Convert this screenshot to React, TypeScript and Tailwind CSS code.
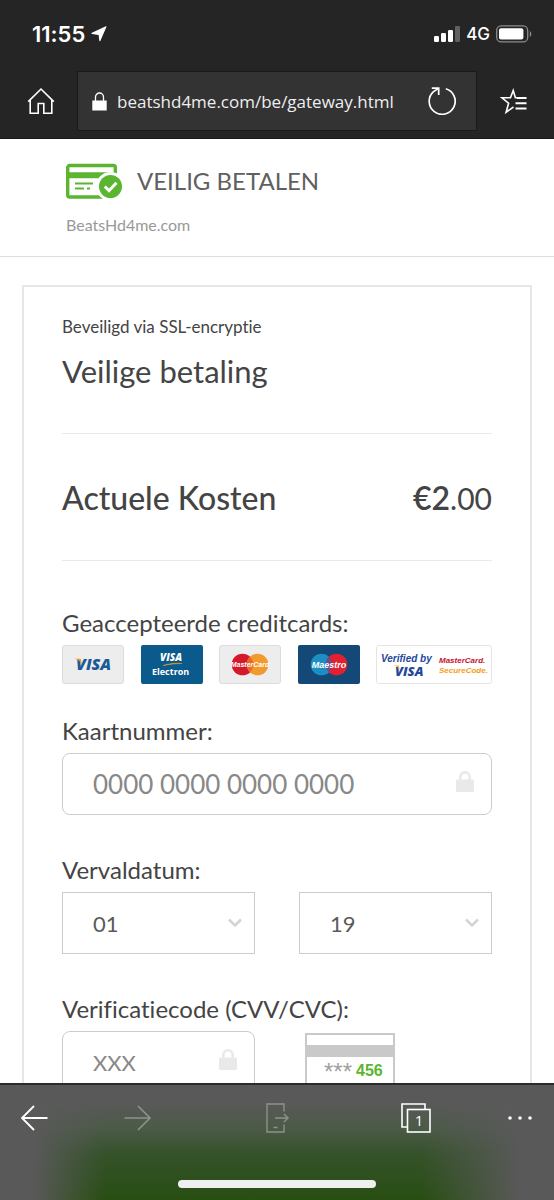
import React from 'react';

const months = ['01', '02', '03', '04', '05', '06', '07', '08', '09', '10', '11', '12'];
const years = ['19', '20', '21', '22', '23', '24', '25', '26', '27', '28'];

const StatusBar: React.FC = () => (
  <div className="flex h-16 items-center justify-between pt-1 pl-8 pr-[22px] font-['Inter',sans-serif] text-white">
    <div className="flex items-center gap-1.5">
      <span className="text-[22px] font-semibold leading-7">11:55</span>
      <svg width="16" height="16" viewBox="0 0 16 16" fill="currentColor">
        <path d="M15.500.8 9.300 14.900c-.3.6-.9.5-1-.1L7.600 8.900 1 8.100C.2 8 .1 7.200.9 6.800L14.800.2c.5-.2.9.1.7.6z" />
      </svg>
    </div>
    <div className="flex items-center gap-1.5">
      <svg width="26" height="16" viewBox="0 0 26 16" fill="currentColor">
        <rect x="0" y="10" width="5" height="6" rx="1.3" />
        <rect x="7" y="7" width="5" height="9" rx="1.3" />
        <rect x="14" y="4" width="5" height="12" rx="1.3" />
        <rect x="21" y="0" width="5" height="16" rx="1.3" opacity=".28" />
      </svg>
      <span className="text-[17px] font-medium leading-7">4G</span>
      <svg width="36" height="18" viewBox="0 0 36 18" fill="none">
        <rect x=".7" y=".9" width="31" height="16" rx="4.5" stroke="#8c8c8c" strokeWidth="1.3" />
        <rect x="3" y="3.2" width="24.4" height="11.4" rx="2" fill="currentColor" />
        <path d="M33.8 6v6c2-.8 2-5.200 0-6z" fill="#8c8c8c" />
      </svg>
    </div>
  </div>
);

const AddressBar: React.FC = () => (
  <div className="flex h-[74px] items-center text-white">
    <button type="button" aria-label="Home" className="flex w-[77px] justify-center pl-1">
      <svg width="28" height="28" viewBox="0 0 28 28" fill="none" stroke="currentColor" strokeWidth="1.600">
        <path d="M1.200 14.600 14 2l12.800 12.600M3.200 13v13.200h8V16.500h5.600v9.700h8V13" />
      </svg>
    </button>
    <div className="flex h-[60px] flex-1 items-center border border-[#1a1a1a] bg-[#333333] pl-3.5 pr-5">
      <svg width="15" height="19" viewBox="0 0 15 19" fill="none">
        <path d="M3.500 9V5a4 4 0 0 1 8 0v4" stroke="currentColor" strokeWidth="1.300" />
        <rect x=".3" y="8.500" width="14.400" height="10" fill="currentColor" />
      </svg>
      <span className="flex-1 pl-2.5 pt-0.5 font-['Open_Sans',sans-serif] text-[17px] leading-6 text-[#eeeeee]">
        beatshd4me.com/be/gateway.html
      </span>
      <button type="button" aria-label="Vernieuwen">
        <svg width="28" height="28" viewBox="0 0 28 28" fill="none" stroke="currentColor" strokeWidth="1.700">
          <path d="M17.800 1.800A13 13 0 1 1 5.500 4.600L10.400 1.500M3.800 1.200h6.900v6.900" />
        </svg>
      </button>
    </div>
    <button type="button" aria-label="Favorieten" className="flex w-[77px] justify-center pr-1">
      <svg width="28" height="27" viewBox="0 0 28 27" fill="none" stroke="currentColor" strokeWidth="1.600">
        <path d="M17 10h9.500M15.500 15.300h11M15.500 20.500h11" strokeWidth="2" />
        <path d="M17.200 9.800h-1.800L13.200 2.500 10.500 9.800H2l6.600 5.400-2.500 9L13.500 19" />
      </svg>
    </button>
  </div>
);

const PaymentLogo: React.FC = () => (
  <svg width="57" height="36" viewBox="0 0 57 36" fill="none">
    <rect x="1.700" y="2.500" width="47.600" height="31.500" rx="2" stroke="#5cb531" strokeWidth="3.400" />
    <path d="M1 9.300h49v6H1z" fill="#5cb531" />
    <path d="M9 20.500h18M9 25.500h9M21 25.500h3" stroke="#5cb531" strokeWidth="2.200" />
    <circle cx="44.500" cy="23.500" r="14.500" fill="#fff" />
    <circle cx="44.500" cy="23.500" r="11.500" fill="#5cb531" />
    <path d="m38.800 23.500 4.200 4.200 7.500-8" stroke="#fff" strokeWidth="3" />
  </svg>
);

const LockIcon: React.FC = () => (
  <svg
    className="pointer-events-none absolute right-[18px] top-[18px]"
    width="18"
    height="21"
    viewBox="0 0 18 21"
    fill="none"
  >
    <path d="M4.300 9.500V6a4.700 4.700 0 0 1 9.400 0v3.500" stroke="#e9e9e9" strokeWidth="2.600" />
    <rect y="8.500" width="18" height="12.500" rx="1" fill="#e9e9e9" />
  </svg>
);

const CardLogos: React.FC = () => (
  <div className="mt-1.5 flex justify-between">
    <svg width="62" height="39" viewBox="0 0 62 39" aria-label="Visa">
      <rect x=".5" y=".5" width="61" height="38" rx="2.500" fill="#ededed" stroke="#dcdcdc" />
      <text x="14" y="25" fontFamily="Open Sans" fontSize="16" fontWeight="800" fontStyle="italic" fill="#1a5a96">
        VISA
      </text>
      <path d="M12.800 13.700h4.500c1.200 0 1.600.6 1.800 1.600l.8 3.700c-1.300-2.500-3.800-4.300-7.100-5.300z" fill="#e79b2f" />
    </svg>
    <svg width="62" height="39" viewBox="0 0 62 39" aria-label="Visa Electron">
      <rect width="62" height="39" rx="2" fill="#0b5a8c" />
      <text x="19" y="16" fontFamily="Open Sans" fontSize="10" fontWeight="800" fontStyle="italic" fill="#fff">
        VISA
      </text>
      <path d="M22 20.500c7-2.300 13-2.400 19-2-6 .2-12 .7-19 2z" fill="#e79b2f" stroke="#e79b2f" strokeWidth=".5" />
      <text x="11" y="30" fontFamily="Open Sans" fontSize="9" fontWeight="700" fill="#fff">
        Electron
      </text>
    </svg>
    <svg width="62" height="39" viewBox="0 0 62 39" aria-label="MasterCard">
      <rect x=".5" y=".5" width="61" height="38" rx="2.500" fill="#ededed" stroke="#dcdcdc" />
      <circle cx="23.500" cy="19.500" r="10.800" fill="#d5192d" />
      <circle cx="38.500" cy="19.500" r="10.800" fill="#f39a2d" />
      <path d="M31 11.800a10.800 10.800 0 0 1 0 15.400 10.800 10.800 0 0 1 0-15.400z" fill="#e8672a" />
      <text
        x="31"
        y="22"
        textAnchor="middle"
        fontFamily="Liberation Sans"
        fontSize="7"
        fontWeight="700"
        fontStyle="italic"
        fill="#fff"
      >
        MasterCard
      </text>
    </svg>
    <svg width="62" height="39" viewBox="0 0 62 39" aria-label="Maestro">
      <rect width="62" height="39" rx="2" fill="#144877" />
      <circle cx="23.500" cy="19.500" r="10.800" fill="#1b8fc4" />
      <circle cx="38.500" cy="19.500" r="10.800" fill="#e3202f" />
      <path d="M31 11.800a10.800 10.800 0 0 1 0 15.400 10.800 10.800 0 0 1 0-15.400z" fill="#6c4b88" />
      <text
        x="31"
        y="23"
        textAnchor="middle"
        fontFamily="Liberation Sans"
        fontSize="9"
        fontWeight="700"
        fontStyle="italic"
        fill="#fff"
      >
        Maestro
      </text>
    </svg>
    <svg width="116" height="39" viewBox="0 0 116 39" aria-label="Verified by Visa, MasterCard SecureCode">
      <rect x=".5" y=".5" width="115" height="38" rx="2.500" fill="#fff" stroke="#e4e4e4" />
      <g fontFamily="Liberation Sans" fontStyle="italic" fontWeight="700">
        <text x="5" y="17" fontSize="10" fill="#24489c">
          Verified by
        </text>
        <text x="19" y="31" fontFamily="Open Sans" fontSize="13" fontWeight="800" fill="#24489c">
          VISA
        </text>
        <text x="63" y="18" fontSize="8" fill="#c4122f">
          MasterCard.
        </text>
        <text x="63" y="28" fontSize="8" fill="#f49b20">
          SecureCode.
        </text>
      </g>
      <path d="M18 20.500h3.600c1 0 1.300.5 1.500 1.300l.7 3.200c-1-2.200-3-3.700-5.800-4.500z" fill="#f5b52e" />
    </svg>
  </div>
);

const CvvCard: React.FC = () => (
  <svg width="90" height="60" viewBox="0 0 90 60" fill="none" aria-label="Voorbeeld verificatiecode">
    <rect x="1" y="1" width="88" height="58" stroke="#c9c9c9" strokeWidth="2" />
    <path d="M1 12h88v12H1z" fill="#c9c9c9" />
    <text x="19" y="47" fontFamily="Liberation Sans" fontSize="24" fill="#a0a0a0">
      ***
    </text>
    <text x="51" y="43" fontFamily="Liberation Sans" fontSize="16" fontWeight="700" fill="#5cb531">
      456
    </text>
  </svg>
);

interface DateSelectProps {
  label: string;
  options: string[];
}

const DateSelect: React.FC<DateSelectProps> = ({ label, options }) => (
  <div className="relative">
    <select
      aria-label={label}
      defaultValue={options[0]}
      className="h-[62px] w-full appearance-none rounded-none border border-[#cccccc] bg-white pl-[30px] pr-10 text-[22px] text-[#5a5a5a]"
    >
      {options.map((option) => (
        <option key={option}>{option}</option>
      ))}
    </select>
    <svg
      className="pointer-events-none absolute right-3 top-6"
      width="16"
      height="14"
      viewBox="0 0 16 14"
      fill="none"
      stroke="#d4d4d4"
      strokeWidth="2.600"
    >
      <path d="m2 3.500 6 6 6-6" />
    </svg>
  </div>
);

const PaymentForm: React.FC = () => (
  <form className="mx-[22px] mt-7 border-2 border-[#e6e6e6] px-[38px] pt-7 pb-10 text-[#444444]">
    <p className="text-[17px] leading-6">Beveiligd via SSL-encryptie</p>
    <h1 className="mt-3 text-[31px] leading-10">Veilige betaling</h1>

    <div className="mt-[42px] flex items-center justify-between border-y border-[#e9e9e9] pt-11 pb-[42px] leading-10">
      <span className="text-[32px] font-medium">Actuele Kosten</span>
      <span className="text-[32px] font-semibold">
        €2<span className="text-[30px] font-normal">.00</span>
      </span>
    </div>

    <p className="mt-[46px] text-2xl leading-8">Geaccepteerde creditcards:</p>
    <CardLogos />

    <label htmlFor="number" className="mt-[31px] block text-2xl leading-8">
      Kaartnummer:
    </label>
    <div className="relative mt-1.5">
      <input
        id="number"
        type="text"
        placeholder="0000 0000 0000 0000"
        className="h-[62px] w-full rounded-lg border border-[#cccccc] bg-white pl-[30px] pr-10 text-[26px] placeholder:text-[#888888]"
      />
      <LockIcon />
    </div>

    <fieldset className="mt-[39px]">
      <legend className="text-2xl leading-8">Vervaldatum:</legend>
      <div className="mt-1.5 grid grid-cols-2 gap-11">
        <DateSelect label="Maand" options={months} />
        <DateSelect label="Jaar" options={years} />
      </div>
    </fieldset>

    <label htmlFor="cvv" className="mt-[39px] block text-2xl leading-8">
      Verificatiecode (CVV/CVC):
    </label>
    <div className="mt-1.5 grid grid-cols-2 gap-11">
      <div className="relative">
        <input
          id="cvv"
          type="text"
          placeholder="XXX"
          className="h-[62px] w-full rounded-lg border border-[#cccccc] bg-white pl-[30px] pr-10 text-[22px] placeholder:text-[#888888]"
        />
        <LockIcon />
      </div>
      <div className="pl-1.5 pt-0.5">
        <CvvCard />
      </div>
    </div>
  </form>
);

const BottomBar: React.FC = () => (
  <footer className="flex h-[117px] shrink-0 flex-col items-center justify-between border-t-2 border-[#2b2b2b] bg-[linear-gradient(to_right,#595959_6%,transparent_19%,transparent_76%,#595959_94%),linear-gradient(#595959_15%,#4b5a47_38%,#35522a_60%,#284e12)] pb-3 text-white">
    <nav className="grid h-[66px] w-full grid-cols-[68px_1fr_1fr_1fr_68px] place-items-center">
      <button type="button" aria-label="Terug">
        <svg width="28" height="26" viewBox="0 0 28 26" fill="none" stroke="currentColor" strokeWidth="1.800">
          <path d="M27.500 13H2M14 1 2 13l12 12" />
        </svg>
      </button>
      <button type="button" aria-label="Vooruit" disabled className="text-[#8b938a]">
        <svg width="28" height="26" viewBox="0 0 28 26" fill="none" stroke="currentColor" strokeWidth="1.600">
          <path d="M.5 13H26M14 1l12 12-12 12" />
        </svg>
      </button>
      <button type="button" aria-label="Doorgaan op pc" disabled className="text-[#8b938a]">
        <svg width="24" height="30" viewBox="0 0 24 30" fill="none" stroke="currentColor" strokeWidth="1.400">
          <path d="M19 8.500V1H2v28h17v-7.500M10 15h13M19 11l4 4-4 4M8.500 24.500h4" />
        </svg>
      </button>
      <button type="button" aria-label="Tabbladen">
        <svg width="30" height="30" viewBox="0 0 30 30" fill="none" stroke="currentColor" strokeWidth="1.600">
          <path d="M6 24H1V1h23v5" />
          <rect x="6.500" y="6.500" width="22.500" height="22.500" />
          <text
            x="18"
            y="23"
            textAnchor="middle"
            fontFamily="Open Sans"
            fontSize="15"
            fill="currentColor"
            stroke="none"
          >
            1
          </text>
        </svg>
      </button>
      <button type="button" aria-label="Meer">
        <svg width="26" height="6" viewBox="0 0 26 6" fill="currentColor">
          <circle cx="3" cy="3" r="1.800" />
          <circle cx="13" cy="3" r="1.800" />
          <circle cx="23" cy="3" r="1.800" />
        </svg>
      </button>
    </nav>
    <div className="h-2 w-[198px] rounded-full bg-[#efefef]" />
  </footer>
);

export default function App() {
  return (
    <div className="flex h-screen flex-col bg-white font-['Lato',sans-serif] [font-variant-ligatures:none]">
      <header className="shrink-0 border-b border-[#1a1a1a] bg-[#252525]">
        <StatusBar />
        <AddressBar />
      </header>
      <main className="min-h-0 flex-1 overflow-hidden">
        <div className="border-b border-[#dedede] px-[66px] pt-6 pb-[21px]">
          <div className="flex items-center gap-3.5">
            <PaymentLogo />
            <span className="text-2xl leading-9 text-[#606060]">VEILIG BETALEN</span>
          </div>
          <p className="mt-4 text-base leading-5 text-[#999999]">BeatsHd4me.com</p>
        </div>
        <PaymentForm />
      </main>
      <BottomBar />
    </div>
  );
}
